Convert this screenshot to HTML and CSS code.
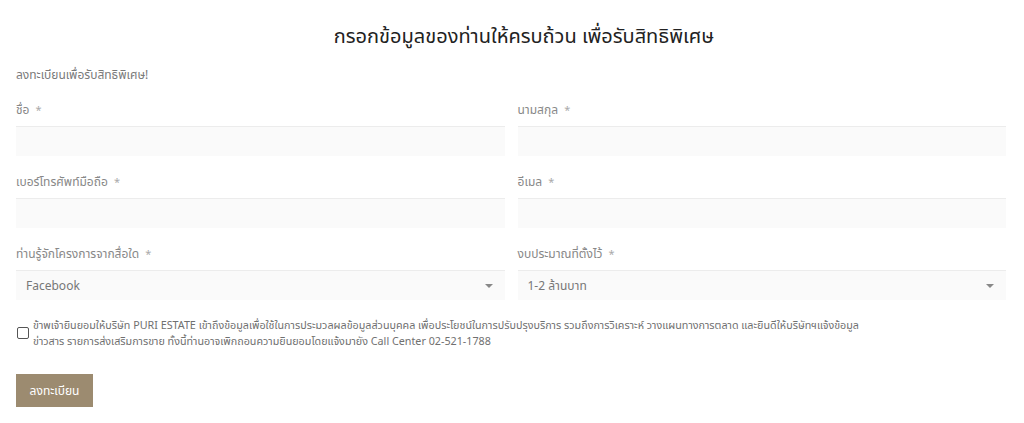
FILE: index.html
```html
<!DOCTYPE html>
<html lang="th">
<head>
<meta charset="utf-8">
<link rel="stylesheet" href="styles.css">
</head>
<body>
<div class="page">
  <h1 class="title">กรอกข้อมูลของท่านให้ครบถ้วน เพื่อรับสิทธิพิเศษ</h1>
  <p class="subtitle">ลงทะเบียนเพื่อรับสิทธิพิเศษ!</p>
  <form class="form">
    <div class="grid">
      <div class="field">
        <label class="label">ชื่อ <span class="req">*</span></label>
        <div class="input"></div>
      </div>
      <div class="field">
        <label class="label">นามสกุล <span class="req">*</span></label>
        <div class="input"></div>
      </div>
      <div class="field">
        <label class="label">เบอร์โทรศัพท์มือถือ <span class="req">*</span></label>
        <div class="input"></div>
      </div>
      <div class="field">
        <label class="label">อีเมล <span class="req">*</span></label>
        <div class="input"></div>
      </div>
      <div class="field">
        <label class="label">ท่านรู้จักโครงการจากสื่อใด <span class="req">*</span></label>
        <div class="input select"><span>Facebook</span><span class="caret"></span></div>
      </div>
      <div class="field">
        <label class="label">งบประมาณที่ตั้งไว้ <span class="req">*</span></label>
        <div class="input select"><span>1-2 ล้านบาท</span><span class="caret"></span></div>
      </div>
    </div>
    <div class="consent">
      <span class="checkbox"></span>
      <p class="consent-text">ข้าพเจ้ายินยอมให้บริษัท PURI ESTATE เข้าถึงข้อมูลเพื่อใช้ในการประมวลผลข้อมูลส่วนบุคคล เพื่อประโยชน์ในการปรับปรุงบริการ รวมถึงการวิเคราะห์ วางแผนทางการตลาด และยินดีให้บริษัทฯแจ้งข้อมูล<br>ข่าวสาร รายการส่งเสริมการขาย ทั้งนี้ท่านอาจเพิกถอนความยินยอมโดยแจ้งมายัง Call Center 02-521-1788</p>
    </div>
    <button type="button" class="btn">ลงทะเบียน</button>
  </form>
</div>
</body>
</html>
```

FILE: styles.css
```css
* { box-sizing: border-box; }
html, body { margin: 0; padding: 0; background: #fff; }
body {
  font-family: "Noto Sans", "Noto Sans Thai", sans-serif;
  color: #7a7a7a;
}
.page {
  padding: 20px 18px 0 16px;
}
.title {
  margin: 0;
  text-align: center;
  font-size: 20px;
  font-weight: 400;
  color: #222;
  line-height: 32px;
  padding-left: 26px;
}
.subtitle {
  margin: 15px 0 0;
  font-size: 12px;
  line-height: 16px;
  color: #7a7a7a;
}
.grid {
  display: grid;
  grid-template-columns: 1fr 1fr;
  column-gap: 13px;
  row-gap: 18px;
  margin-top: 19px;
}
.field { display: flex; flex-direction: column; }
.label {
  font-size: 12px;
  line-height: 16px;
  color: #888;
  margin-bottom: 8px;
}
.req { color: #aaa; margin-left: 3px; font-size: 11px; }
.input {
  height: 30px;
  background: #fafafa;
  border-top: 1px solid #ececec;
}
.select {
  display: flex;
  align-items: center;
  justify-content: space-between;
  padding: 0 12px 0 10px;
  font-size: 12px;
  color: #777;
}
.caret {
  width: 0;
  height: 0;
  border-left: 4px solid transparent;
  border-right: 4px solid transparent;
  border-top: 4px solid #888;
}
.consent {
  display: flex;
  align-items: center;
  margin-top: 17px;
  gap: 4px;
}
.checkbox {
  width: 12px;
  height: 12px;
  border: 1px solid #555;
  border-radius: 2px;
  flex: none;
  margin-left: 1px;
}
.consent-text {
  margin: 0;
  font-size: 10.75px;
  line-height: 16px;
  color: #707070;
}
.btn {
  display: block;
  margin-top: 25px;
  width: 77px;
  height: 33px;
  background: #9c8b70;
  border: none;
  color: #fff;
  font-family: inherit;
  font-size: 12px;
  padding: 0;
}
```
